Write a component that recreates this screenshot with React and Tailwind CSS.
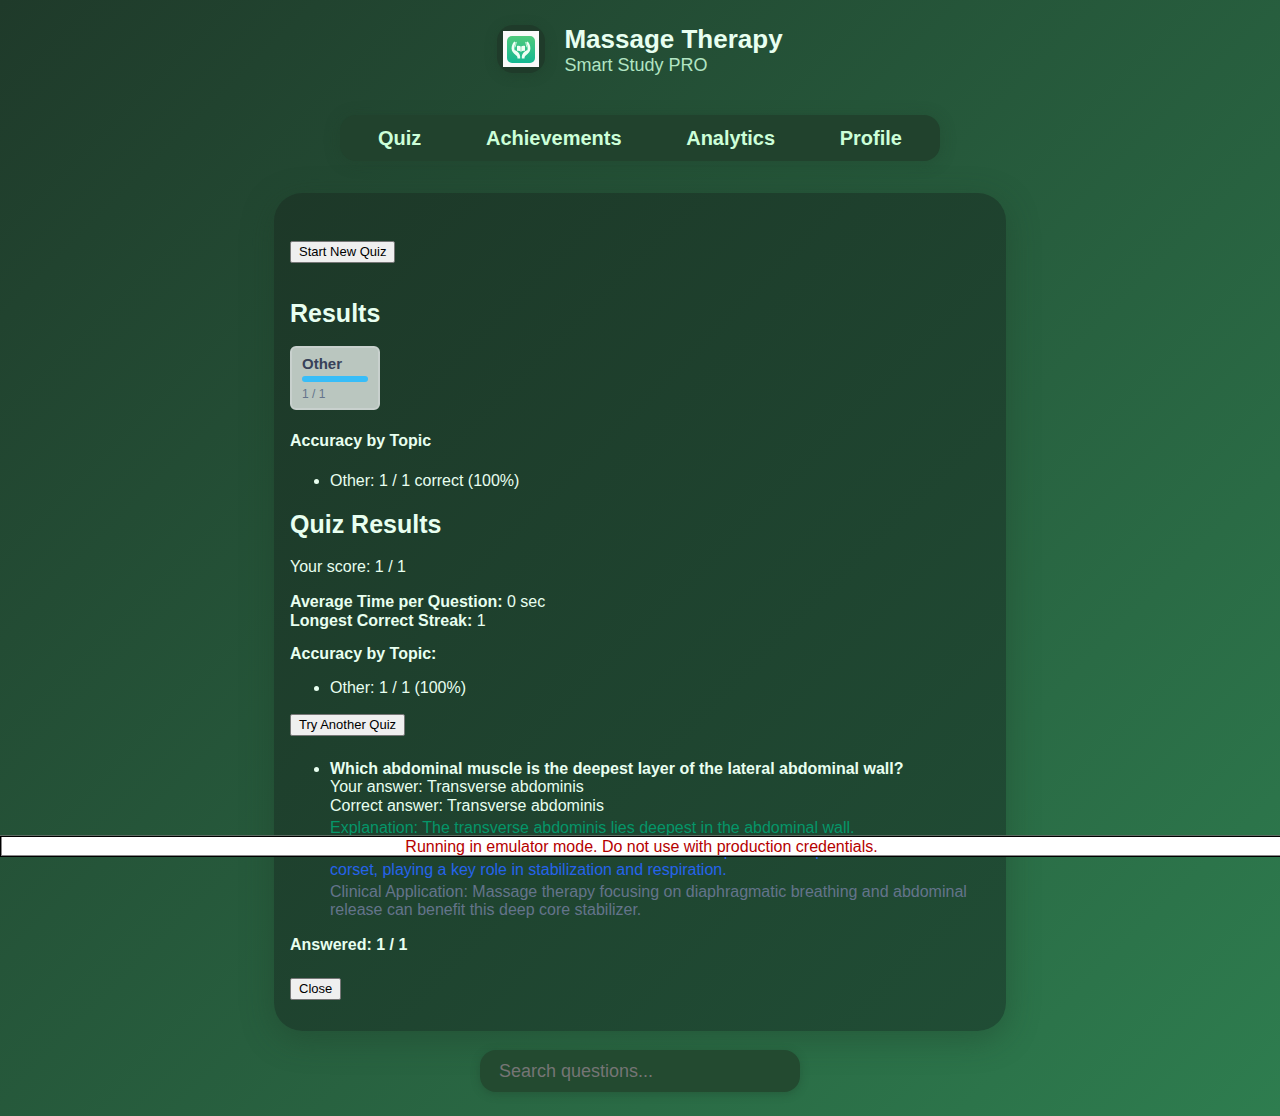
const tabs = ["Quiz", "Achievements", "Analytics", "Profile"];

function SmallButton({ children, className = "" }) {
  return (
    <button
      type="button"
      className={`block rounded-[2px] border border-[#767676] bg-[#efefef] px-2 text-[13px] leading-5 text-black ${className}`}
    >
      {children}
    </button>
  );
}

function Logo() {
  return (
    <div className="flex size-12 items-center justify-center rounded-2xl bg-[#1f3b2a] shadow-[0_2px_12px_rgba(30,60,40,0.4)]">
      <svg viewBox="0 0 36 36" className="size-9" role="img" aria-label="Massage Therapy logo">
        <defs>
          <linearGradient id="logoFill" x1="0" y1="0" x2="0" y2="1">
            <stop offset="0" stopColor="#4fca7c" />
            <stop offset="1" stopColor="#14b893" />
          </linearGradient>
        </defs>
        <rect width="36" height="36" fill="#fafafa" />
        <rect x="4" y="5" width="28" height="27" rx="5" fill="url(#logoFill)" />
        <path
          d="M11.200 10.600C8.800 13.500 8 17 9 19.800c.8 2.300 3.600 3.900 4.800 5.300.6.700.7 1.400.7 2.300h2.700c.2-3.300-.9-5-3-6.800-1-.9-2-1.500-2.600-1.300-.6-2.300-.3-5.300 1.200-7.800z M24.800 10.600c2.400 2.900 3.200 6.400 2.200 9.200-.8 2.300-3.600 3.900-4.800 5.300-.6.700-.7 1.400-.7 2.300h-2.700c-.2-3.300.9-5 3-6.800 1-.9 2-1.500 2.600-1.300.6-2.300.3-5.300-1.200-7.800z"
          fill="#effff5"
        />
        <path d="M14 15c1.500-.5 2.900-.2 4 .7 1.100-.9 2.500-1.200 4-.7v4.800c-1.500-.3-2.900 0-4 .9-1.100-.9-2.500-1.200-4-.9z" fill="#effff5" />
        <path d="M18 15.700v5" stroke="#55c99a" strokeWidth=".6" />
        <path d="M13.300 11.300l-1.200 4.600M22.700 11.300l1.200 4.600" stroke="#d6f7e4" strokeWidth=".9" strokeLinecap="round" />
      </svg>
    </div>
  );
}

export default function App() {
  return (
    <div className="relative flex min-h-screen flex-col items-center overflow-x-hidden bg-[linear-gradient(135deg,#1f3a2a_0%,#2e7d4f_100%)] pb-6 font-['Liberation_Sans',Arial,sans-serif] text-base leading-[18px] text-[#e8fff0]">
      <header className="flex items-center gap-[19px] pt-[23px]">
        <Logo />
        <div>
          <h1 className="text-[26px] leading-8 font-bold">Massage Therapy</h1>
          <p className="text-lg leading-5 text-[#b2e5c3]">Smart Study PRO</p>
        </div>
      </header>

      <nav className="mt-10 flex w-full max-w-[600px] justify-between rounded-2xl bg-[#21422d] px-[38px] py-[11px] shadow-[0_2px_16px_rgba(30,60,40,0.3)]">
        {tabs.map((tab) => (
          <button key={tab} type="button" className="text-xl leading-6 font-bold text-[#ccffd8]">
            {tab}
          </button>
        ))}
      </nav>

      <main className="mt-8 w-full max-w-[732px] rounded-[28px] bg-[linear-gradient(135deg,#1d3828,#204d35)] px-4 pt-12 pb-[31px] shadow-[0_8px_32px_rgba(30,60,40,0.4)]">
        <SmallButton>Start New Quiz</SmallButton>

        <h2 className="mt-9 text-[25px] leading-7 font-bold">Results</h2>
        <section className="mt-[19px] w-[90px] rounded-md border-2 border-[#c8d0cd] bg-[#bac6bf] px-[10px] pt-[7px] pb-[7px]">
          <h3 className="text-[15px] leading-[17px] font-bold text-[#374159]">Other</h3>
          <div className="mt-1 h-[6px] rounded-[3px] bg-[#38bdf8]" />
          <p className="mt-[5px] text-xs leading-[14px] text-[#64748b]">1 / 1</p>
        </section>

        <h4 className="mt-[22px] font-bold">Accuracy by Topic</h4>
        <ul className="mt-[22px] list-disc pl-10">
          <li>Other: 1 / 1 correct (100%)</li>
        </ul>

        <h2 className="mt-5 text-[25px] leading-7 font-bold">Quiz Results</h2>
        <p className="mt-5">Your score: 1 / 1</p>
        <div className="mt-4 leading-[19px]">
          <p>
            <strong>Average Time per Question:</strong> 0 sec
          </p>
          <p>
            <strong>Longest Correct Streak:</strong> 1
          </p>
        </div>
        <p className="mt-[15px] font-bold">Accuracy by Topic:</p>
        <ul className="mt-4 list-disc pl-10">
          <li>Other: 1 / 1 (100%)</li>
        </ul>
        <SmallButton className="mt-[17px]">Try Another Quiz</SmallButton>

        <ul className="mt-6 list-disc pl-10">
          <li>
            <strong>Which abdominal muscle is the deepest layer of the lateral abdominal wall?</strong>
            <p>Your answer: Transverse abdominis</p>
            <p className="leading-[19px]">Correct answer: Transverse abdominis</p>
            <p className="mt-1 text-[#059669]">Explanation: The transverse abdominis lies deepest in the abdominal wall.</p>
            <p className="mt-1 leading-[19px] text-[#2563eb]">
              Additional Info: The transverse abdominis acts as a deep abdominal pressure
              <br />
              corset, playing a key role in stabilization and respiration.
            </p>
            <p className="mt-1 text-[#64748b]">
              Clinical Application: Massage therapy focusing on diaphragmatic breathing and abdominal release can benefit this deep core stabilizer.
            </p>
          </li>
        </ul>

        <p className="mt-[17px] font-bold">Answered: 1 / 1</p>
        <SmallButton className="mt-6">Close</SmallButton>
      </main>

      <input
        type="search"
        aria-label="Search questions"
        placeholder="Search questions..."
        className="mt-[19px] w-full max-w-80 rounded-2xl bg-[#234a30] px-[19px] py-[10px] text-lg leading-[22px] text-[#e8fff0] shadow-[0_2px_8px_rgba(30,60,40,0.35)] outline-none placeholder:text-[#757575]"
      />

      <p
        role="status"
        className="absolute top-[836px] -right-[3px] left-0 border border-black bg-white text-center leading-[19px] text-[#b50000] shadow-[0_-1px_0_#5c6b62,inset_1px_0_0_#888,inset_0_-1px_0_#888]"
      >
        Running in emulator mode. Do not use with production credentials.
      </p>
    </div>
  );
}
